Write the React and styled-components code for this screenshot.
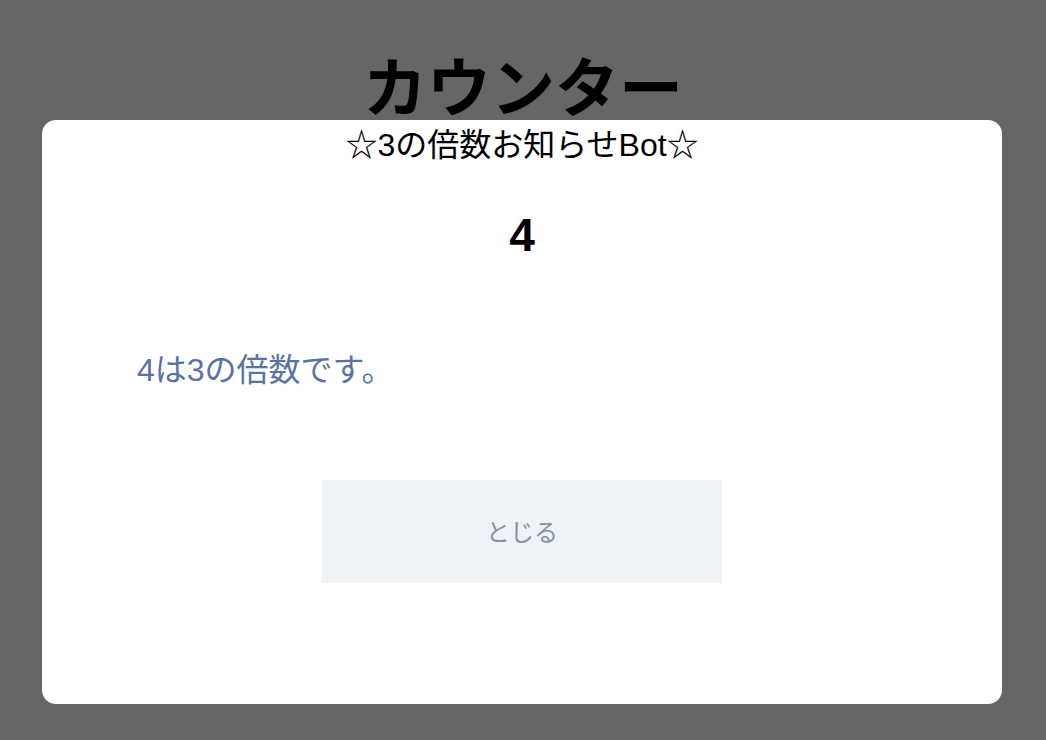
import React from "react";
import styled, { createGlobalStyle } from "styled-components";

const GlobalStyle = createGlobalStyle`
  html, body {
    margin: 0;
    padding: 0;
    background: #666666;
    font-family: "Liberation Sans", "Noto Sans CJK JP", sans-serif;
  }
`;

const Page = styled.div`
  min-height: 740px;
  display: flex;
  flex-direction: column;
  align-items: center;
`;

const Title = styled.h1`
  margin: 45px 0 0;
  font-family: "Noto Sans CJK JP", sans-serif;
  font-size: 64px;
  font-weight: 700;
  line-height: 1.2;
  color: #000;
`;

const Overlay = styled.div`
  position: fixed;
  inset: 0;
  display: flex;
  justify-content: flex-start;
  align-items: flex-start;
  padding: 120px 0 0 42px;
`;

const Modal = styled.section`
  width: 960px;
  height: 584px;
  background: #fff;
  border-radius: 14px;
  display: flex;
  flex-direction: column;
  align-items: center;
`;

const Heading = styled.h2`
  margin: 3px 0 0;
  font-size: 32px;
  font-weight: 400;
  line-height: 44px;
  color: #000;
`;

const Count = styled.p`
  margin: 41px 0 0;
  font-size: 46px;
  font-weight: 700;
  line-height: 1.2;
  color: #000;
`;

const Message = styled.p`
  align-self: stretch;
  margin: 87px 0 0;
  padding-left: 95px;
  font-size: 32px;
  line-height: 40px;
  color: #5a73a2;
`;

const CloseButton = styled.button`
  margin-top: 90px;
  width: 400px;
  height: 103px;
  border: none;
  border-radius: 0;
  background: #eff2f7;
  color: #8791a5;
  font-family: "Noto Sans CJK JP", sans-serif;
  font-size: 24px;
  padding-bottom: 4px;
  cursor: pointer;
`;

export default function App() {
  const count = 4;
  return (
    <>
      <GlobalStyle />
      <Page>
        <Title>カウンター</Title>
      </Page>
      <Overlay>
        <Modal>
          <Heading>☆3の倍数お知らせBot☆</Heading>
          <Count>{count}</Count>
          <Message>{count}は3の倍数です。</Message>
          <CloseButton>とじる</CloseButton>
        </Modal>
      </Overlay>
    </>
  );
}
